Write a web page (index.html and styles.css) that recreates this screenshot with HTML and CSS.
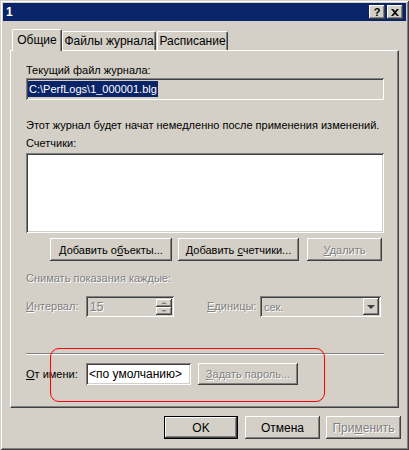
FILE: index.html
```html
<!DOCTYPE html>
<html>
<head>
<meta charset="utf-8">
<link rel="stylesheet" href="styles.css">
</head>
<body>

<div class="window">
  <div class="titlebar">
    <span class="title">1</span>
    <div class="caption-btns">
      <span class="cbtn help">?</span>
      <span class="cbtn close">
        <svg width="8" height="7" viewBox="0 0 8 7"><path d="M0 0h2l2 2l2-2h2l-3 3.5l3 3.5h-2l-2-2l-2 2h-2l3-3.5z" fill="#000"/></svg>
      </span>
    </div>
  </div>

  <div class="tabs">
    <div class="tab active t1">Общие</div>
    <div class="tab t2">Файлы журнала</div>
    <div class="tab t3">Расписание</div>
  </div>

  <div class="panel">
    <div class="label l-current">Текущий файл журнала:</div>
    <div class="field file-field"><span class="sel">C:\PerfLogs\1_000001.blg</span></div>

    <div class="label l-note">Этот журнал будет начат немедленно после применения изменений.</div>
    <div class="label l-counters">Счетчики:</div>
    <div class="field listbox"></div>

    <div class="btn-row">
      <div class="btn b-objects"><span>Добавить о<u>б</u>ъекты...</span></div>
      <div class="btn b-counters"><span>Добавить <u>с</u>четчики...</span></div>
      <div class="btn b-delete disabled"><span><u>У</u>далить</span></div>
    </div>

    <div class="label disabled l-sample">Снимать показания каждые:</div>

    <div class="interval-row">
      <span class="label disabled l-interval"><u>И</u>нтервал:</span>
      <div class="field spin off">
        <span class="disabled">15</span>
        <div class="spin-btns">
          <div class="spin-btn"><span class="arr up"></span></div>
          <div class="spin-btn"><span class="arr down"></span></div>
        </div>
      </div>
      <span class="label disabled l-units"><u>Е</u>диницы:</span>
      <div class="field combo off">
        <span class="disabled">сек.</span>
        <div class="drop-btn"><span class="arr drop"></span></div>
      </div>
    </div>

    <div class="separator"></div>

    <div class="runas-row">
      <span class="label l-runas"><u>О</u>т имени:</span>
      <div class="field user-field">&lt;по умолчанию&gt;</div>
      <div class="btn b-pass disabled"><span><u>З</u>адать пароль...</span></div>
    </div>
  </div>

  <div class="dialog-btns">
    <div class="btn default b-ok"><span>OK</span></div>
    <div class="btn b-cancel"><span>Отмена</span></div>
    <div class="btn b-apply disabled"><span>При<u>м</u>енить</span></div>
  </div>

  <div class="highlight"></div>
</div>

</body>
</html>
```

FILE: styles.css
```css
body {
  margin: 0;
  background: #d4d0c8;
  font-family: "Liberation Sans", Arial, sans-serif;
  font-size: 11px;
  color: #000;
}

.window {
  position: relative;
  width: 409px;
  height: 450px;
  box-sizing: border-box;
  padding: 3px;
  background: #d4d0c8;
  box-shadow: inset 1px 1px #d4d0c8, inset -1px -1px #404040, inset 2px 2px #fff, inset -2px -2px #808080;
}

/* title bar */
.titlebar {
  height: 18px;
  background: #0a246a;
  display: flex;
  align-items: center;
  justify-content: space-between;
  padding: 0 3px 0 3px;
}

.title {
  color: #fff;
  font-weight: bold;
  font-size: 12px;
}

.caption-btns {
  display: flex;
  gap: 2px;
}

.cbtn {
  width: 16px;
  height: 14px;
  box-sizing: border-box;
  background: #d4d0c8;
  box-shadow: inset -1px -1px #404040, inset 1px 1px #fff, inset -2px -2px #808080;
  display: flex;
  align-items: center;
  justify-content: center;
}

.help {
  font-weight: bold;
  font-size: 11px;
  line-height: 14px;
}

/* tabs */
.tabs {
  display: flex;
  align-items: flex-end;
  margin-top: 8px;
  padding-left: 9px;
  height: 21px;
}

.tab {
  box-sizing: border-box;
  height: 19px;
  padding-top: 2px;
  text-align: center;
  background: #d4d0c8;
  border-top: 1px solid #fff;
  border-left: 1px solid #fff;
  border-right: 1px solid #404040;
  box-shadow: inset -1px 0 #808080;
  border-top-left-radius: 2px;
  border-top-right-radius: 2px;
  line-height: 14px;
  font-size: 12px;
}

.tab.active {
  height: 22px;
  margin-bottom: -1px;
  position: relative;
  z-index: 1;
  padding-top: 3px;
}

.t1 { width: 50px; }
.t2 { width: 94px; }
.t3 { width: 71px; margin-left: 1px; }

.panel {
  margin: 0 7px;
  height: 358px;
  box-sizing: border-box;
  border: 1px solid;
  border-color: #fff #404040 #404040 #fff;
  box-shadow: inset -1px -1px #808080;
  padding: 0 14px 0 15px;
  display: flex;
  flex-direction: column;
}

.label {
  line-height: 13px;
  white-space: nowrap;
}

.disabled {
  color: #808080;
  text-shadow: 1px 1px 0 #fff;
}

.field {
  box-sizing: border-box;
  background: #fff;
  box-shadow: inset 1px 1px #808080, inset -1px -1px #fff, inset 2px 2px #404040, inset -2px -2px #d4d0c8;
}

.field.off {
  background: #d4d0c8;
}

.l-current { margin-top: 13px; }

.file-field {
  margin-top: 1px;
  height: 22px;
  background: #d4d0c8;
  padding: 3px 0 0 2px;
}

.sel {
  background: #0a246a;
  color: #fff;
  padding: 1px;
  line-height: 14px;
  display: inline-block;
}

.l-note { margin-top: 19px; }
.l-counters { margin-top: 5px; }

.listbox {
  margin-top: 3px;
  height: 80px;
}

/* buttons */
.btn {
  box-sizing: border-box;
  height: 23px;
  background: #d4d0c8;
  box-shadow: inset -1px -1px #404040, inset 1px 1px #fff, inset -2px -2px #808080;
  display: flex;
  align-items: center;
  justify-content: center;
  white-space: nowrap;
}

.btn.default {
  border: 1px solid #000;
}

.btn-row {
  display: flex;
  margin-top: 5px;
  padding-left: 24px;
}

.b-objects { width: 122px; }
.b-counters { width: 121px; margin-left: 6px; }
.b-delete { width: 75px; margin-left: 8px; }

.l-sample { margin-top: 11px; }

.interval-row {
  display: flex;
  align-items: center;
  margin-top: 11px;
  height: 21px;
}

.l-interval { width: 60px; }

.spin {
  width: 88px;
  height: 21px;
  display: flex;
  align-items: center;
  justify-content: space-between;
  padding: 0 2px 0 4px;
  font-size: 12px;
}

.spin-btns {
  display: flex;
  flex-direction: column;
}

.spin-btn {
  width: 16px;
  height: 8px;
  box-sizing: border-box;
  background: #d4d0c8;
  box-shadow: inset -1px -1px #404040, inset 1px 1px #fff, inset -2px -2px #808080;
  display: flex;
  align-items: center;
  justify-content: center;
}

.arr {
  width: 0;
  height: 0;
  border-left: 3px solid transparent;
  border-right: 3px solid transparent;
}

.arr.up { border-bottom: 2px solid #808080; }
.arr.down { border-top: 2px solid #808080; }
.arr.drop {
  border-left-width: 4px;
  border-right-width: 4px;
  border-top: 4px solid #404040;
}

.l-units { margin-left: 33px; width: 53px; }

.combo {
  width: 121px;
  height: 21px;
  display: flex;
  align-items: center;
  justify-content: space-between;
  padding: 0 2px 0 4px;
}

.drop-btn {
  width: 16px;
  height: 17px;
  box-sizing: border-box;
  background: #d4d0c8;
  box-shadow: inset -1px -1px #404040, inset 1px 1px #fff, inset -2px -2px #808080;
  display: flex;
  align-items: center;
  justify-content: center;
}

.separator {
  margin-top: 36px;
  height: 1px;
  background: #808080;
  border-bottom: 1px solid #fff;
}

.runas-row {
  display: flex;
  align-items: center;
  margin-top: 8px;
}

.l-runas { width: 60px; }

.user-field {
  width: 105px;
  height: 22px;
  padding: 4px 0 0 3px;
  font-size: 12px;
  line-height: 14px;
}

.b-pass {
  width: 100px;
  height: 22px;
  margin-left: 7px;
}

.dialog-btns {
  display: flex;
  justify-content: flex-end;
  margin-top: 8px;
  padding-right: 5px;
}

.b-ok { width: 74px; font-size: 12px; }
.b-cancel { width: 75px; margin-left: 7px; font-size: 12px; }
.b-apply { width: 75px; margin-left: 6px; font-size: 12px; }

/* red annotation frame */
.highlight {
  position: absolute;
  left: 50px;
  top: 348px;
  width: 275px;
  height: 54px;
  box-sizing: border-box;
  border: 1px solid #f00;
  border-radius: 9px;
}
```
